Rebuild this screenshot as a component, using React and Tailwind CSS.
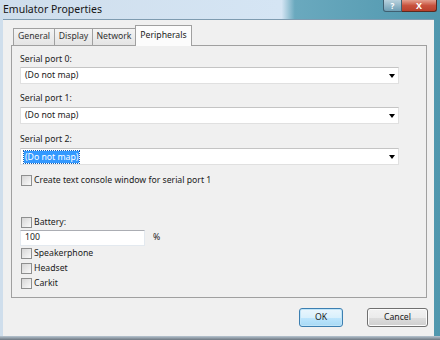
const Check = ({ label }) => (
  <div className="flex h-[15px] items-center">
    <span className="ml-[1px] mr-[2px] h-[11px] w-[11px] border border-[#8e8f8f] bg-gradient-to-br from-[#d6d6d6] to-[#fafafa]" />
    <span>{label}</span>
  </div>
);

const Combo = ({ selected }) => (
  <div className="flex h-[17px] w-[379px] items-center border border-[#e0e0e0] border-t-[#c4c4c4] bg-white pl-[3px] pr-[3px]">
    {selected ? (
      <span className="bg-[#3399ff] px-[1px] leading-[12px] text-white outline outline-1 outline-dotted outline-[#1a5fb0]">
        (Do not map)
      </span>
    ) : (
      <span className="px-[1px]">(Do not map)</span>
    )}
    <span className="ml-auto h-0 w-0 border-l-[3px] border-r-[3px] border-t-[4px] border-l-transparent border-r-transparent border-t-black" />
  </div>
);

const Tab = ({ label, width, active }) =>
  active ? (
    <div
      className="relative z-10 -mb-px -ml-px flex h-[21px] items-start justify-center border border-b-0 border-[#a0a0a0] bg-[#fcfcfc] pt-[3px]"
      style={{ width }}
    >
      {label}
    </div>
  ) : (
    <div
      className="-ml-px flex h-[17px] items-center justify-center border border-b-0 border-[#a0a0a0] bg-gradient-to-b from-[#f4f4f4] to-[#e4e4e4] text-[#333] first:ml-0"
      style={{ width }}
    >
      {label}
    </div>
  );

export default function App() {
  return (
    <div className="flex h-[340px] w-[440px] flex-col overflow-hidden bg-[linear-gradient(90deg,#cfdeec_0%,#d5e5f4_64%,#6aa9be_67%,#4f97ae_100%)] font-['Noto_Sans',sans-serif] text-[8.7px] text-[#1b1b1b]">
      {/* title bar */}
      <div className="flex h-[19px] shrink-0 items-start">
        <span className="pl-[3px] pt-[1px] text-[10.5px] leading-[16px] text-[#151515]">
          Emulator Properties
        </span>
        <div className="ml-auto mr-[3px] flex">
          <div className="flex h-[12px] w-[19px] items-center justify-center rounded-bl-[3px] border border-t-0 border-[#3f5f70] bg-gradient-to-b from-[#b9d2de] to-[#6f9fb5] text-[8px] font-bold leading-none text-white">
            ?
          </div>
          <div className="flex h-[12px] w-[35px] items-center justify-center rounded-br-[3px] border border-l-0 border-t-0 border-[#5a2a20] bg-gradient-to-b from-[#e3a090] via-[#c8523e] to-[#b8402c] text-[9px] font-bold leading-none text-white">
            X
          </div>
        </div>
      </div>

      {/* client area */}
      <div className="ml-[3px] mr-[6px] flex flex-1 flex-col border-t border-[#7e9bb0] bg-[#f0f0f0]">
        <div className="ml-[10px] mt-[6px] flex h-[19px] items-end">
          <Tab label="General" width={42} />
          <Tab label="Display" width={39} />
          <Tab label="Network" width={44} />
          <Tab label="Peripherals" width={57} active />
        </div>

        <div className="ml-[8px] flex h-[253px] w-[416px] flex-col border border-[#a0a0a0] pl-[8px] pt-[6px]">
          <div className="h-[14px] leading-[14px]">Serial port 0:</div>
          <div className="mt-[1px]">
            <Combo />
          </div>
          <div className="mt-[7px] h-[14px] leading-[14px]">Serial port 1:</div>
          <div className="mt-[2px]">
            <Combo />
          </div>
          <div className="mt-[8px] h-[14px] leading-[14px]">Serial port 2:</div>
          <div className="mt-[2px]">
            <Combo selected />
          </div>
          <div className="mt-[8px]">
            <Check label="Create text console window for serial port 1" />
          </div>
          <div className="mt-[27px]">
            <Check label="Battery:" />
          </div>
          <div className="flex items-center">
            <div className="flex h-[16px] w-[125px] items-center border border-[#e3e9ef] border-t-[#abadb3] bg-white pl-[4px]">
              100
            </div>
            <span className="ml-[8px]">%</span>
          </div>
          <Check label="Speakerphone" />
          <Check label="Headset" />
          <Check label="Carkit" />
        </div>

        <div className="mr-[6px] mt-[10px] flex justify-end gap-[24px]">
          <button className="h-[19px] w-[44px] rounded-[3px] border border-[#3c7fb1] bg-[linear-gradient(180deg,#eaf6fd_0%,#d9f0fc_50%,#bee6fd_51%,#a7d9f5_100%)] shadow-[inset_0_0_0_1px_#bfe4f8]">
            OK
          </button>
          <button className="h-[19px] w-[61px] rounded-[3px] border border-[#707070] bg-[linear-gradient(180deg,#f2f2f2_0%,#ebebeb_50%,#dddddd_51%,#cfcfcf_100%)] shadow-[inset_0_0_0_1px_#fcfcfc]">
            Cancel
          </button>
        </div>
      </div>

      {/* bottom frame */}
      <div className="h-[4px] shrink-0 bg-gradient-to-b from-[#b8c6d2] to-[#6e7882]" />
    </div>
  );
}
